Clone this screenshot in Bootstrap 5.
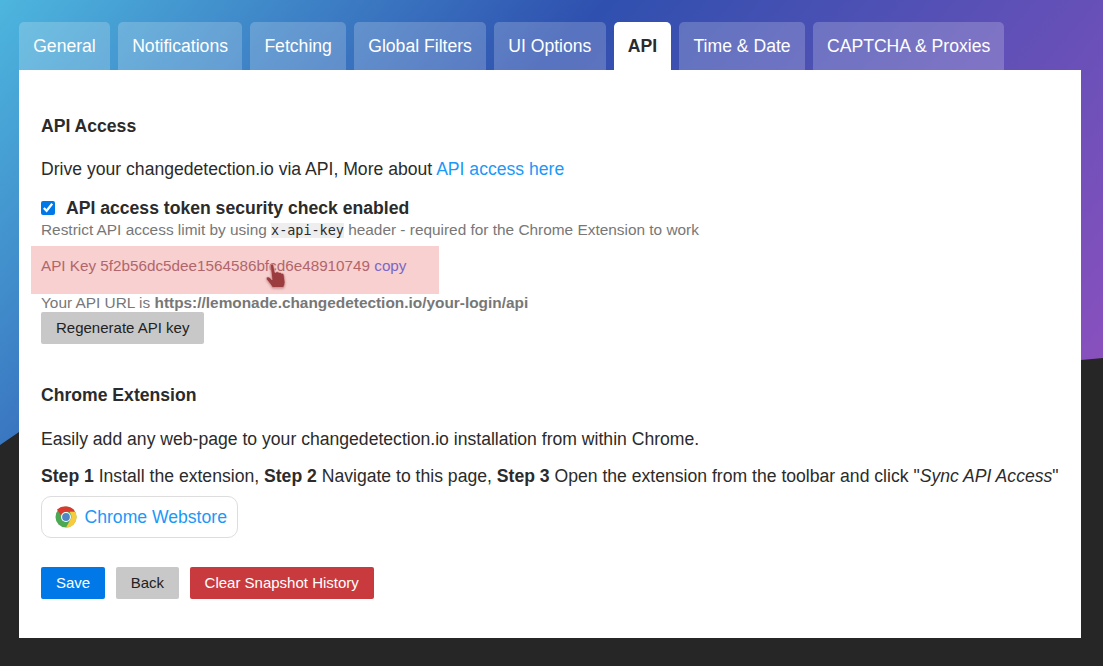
<!DOCTYPE html>
<html lang="en">
<head>
<meta charset="utf-8">
<title>Settings - API</title>
<link rel="stylesheet" href="https://cdn.jsdelivr.net/npm/bootstrap@5.3.0/dist/css/bootstrap.min.css">
<style>
html,body{height:100%}
body{font-family:"Liberation Sans",Arial,sans-serif;background:#262626;color:#2b2b2b;font-size:17.6px;line-height:1.5;position:relative;overflow:hidden;min-height:666px}
.bg-sweep{position:absolute;left:0;top:0;width:1103px;height:445px;background:linear-gradient(130deg,#4db6de,#2f50af 41%,#9150bf 100%);clip-path:polygon(0 0,1103px 0,1103px 358px,1081px 360px,19px 432px,0 445px)}
.page-wrap{position:relative;padding:22px 22px 0 19px}
.tabbar{display:flex;gap:8px;list-style:none;margin:0;padding:0;height:48px}
.tabbar a{display:block;height:48px;padding:0 14.2px;line-height:48px;font-size:17.6px;color:#fff;background:rgba(255,255,255,.2);border-radius:5px 5px 0 0;text-decoration:none}
.tabbar a.on{background:#fff;color:#2b2b2b;font-weight:700}
.sheet{background:#fff;height:568px;padding:0 22px}
.head-a{font-size:17.6px;font-weight:700;line-height:26px;margin:0;padding-top:43px}
.lede{margin:0;padding-top:17px;line-height:26px}
.lede-easy{padding-top:18px}
.lede-steps{padding-top:11px}
.lede a,.store a{color:#1b98f8;text-decoration:none}
.check-row{display:flex;align-items:center;gap:11px;padding-top:13px;height:39px;font-weight:700;line-height:26px}
.check-row input{width:14px;height:14px;margin:0;accent-color:#0078e7}
.hint{font-size:15.4px;color:#777;line-height:20px;margin:-1px 0 0}
.hint code{font-family:"DejaVu Sans Mono",monospace;font-size:13.45px;color:#2b2b2b;background:#eee;padding:0}
.keybox{position:relative;margin:5px 0 0 -10px;width:408px;height:48px;background:#f8d0d0;padding-left:10px;line-height:39px;font-size:15.25px;color:#b0666b}
.keybox a{color:#7a67c9;text-decoration:none}
.pointer{position:absolute;left:233px;top:17px;width:24px;height:28px;filter:drop-shadow(0 1px 1px rgba(120,40,40,.35))}
.url-line{font-size:15.4px;color:#777;line-height:18px;margin:0}
.pbtn{display:inline-block;font-size:15px;line-height:18px;padding:7px 15px;border-radius:2px;border:0;text-decoration:none;white-space:nowrap}
.grey-btn{background:#c8c8c8;color:#222}
.blue-btn{background:#0078e7;color:#fff}
.red-btn{background:#c93a3e;color:#fff}
.back-btn{padding-left:14.5px;padding-right:14.5px}
.regen{display:block;width:163px;height:32px;margin-top:0}
.head-b{font-size:17.6px;font-weight:700;line-height:26px;margin:0;padding-top:38px}
.store{display:inline-flex;align-items:center;gap:7.500px;height:42px;padding:0 10px 0 13px;border:1px solid #ddd;border-radius:10px;margin-top:7px}
.actions{display:flex;gap:11px;margin-top:29px}
.actions .pbtn{height:32px}
</style>
</head>
<body>
<div class="bg-sweep"></div>
<div class="page-wrap">
<ul class="tabbar">
<li><a href="#">General</a></li>
<li><a href="#">Notifications</a></li>
<li><a href="#">Fetching</a></li>
<li><a href="#">Global Filters</a></li>
<li><a href="#">UI Options</a></li>
<li><a href="#" class="on">API</a></li>
<li><a href="#">Time &amp; Date</a></li>
<li><a href="#">CAPTCHA &amp; Proxies</a></li>
</ul>
<div class="sheet">
<h4 class="head-a">API Access</h4>
<p class="lede">Drive your changedetection.io via API, More about <a href="#">API access here</a></p>
<label class="check-row"><input type="checkbox" checked>API access token security check enabled</label>
<p class="hint">Restrict API access limit by using <code>x-api-key</code> header - required for the Chrome Extension to work</p>
<div class="keybox">API Key 5f2b56dc5dee1564586bfcd6e48910749 <a href="#">copy</a>
<svg class="pointer" viewBox="0 0 24 28" aria-hidden="true"><path d="M7 1.500c1-.8 2.300-.3 2.600 1l1.400 7 1.500-.6c1-.3 2 0 2.500.7 1-.4 2 0 2.500.8 1.200-.3 2.200.4 2.500 1.600l.9 6c.3 2.300-.3 4.500-1.500 6.500H8.500c-1.500-2.500-3.500-5-5.500-7.500-.8-1-.7-2.200 0-2.800.9-.6 2-.3 3 .6l2 2L6.500 3.500c-.1-.8 0-1.500.5-2z" fill="#9b3c3f" stroke="#e7b5b5" stroke-width=".6"/></svg></div>
<p class="url-line">Your API URL is <strong>https://lemonade.changedetection.io/your-login/api</strong></p>
<a href="#" class="pbtn grey-btn regen">Regenerate API key</a>
<h4 class="head-b">Chrome Extension</h4>
<p class="lede lede-easy">Easily add any web-page to your changedetection.io installation from within Chrome.</p>
<p class="lede lede-steps"><strong>Step 1</strong> Install the extension, <strong>Step 2</strong> Navigate to this page, <strong>Step 3</strong> Open the extension from the toolbar and click "<em>Sync API Access</em>"</p>
<div class="store"><svg width="22" height="22" viewBox="0 0 22 22" aria-hidden="true"><circle cx="11" cy="11" r="10.500" fill="#4ca853"/><path d="M11 .5a10.500 10.500 0 0 1 9.100 5.250H11A5.250 5.250 0 0 0 6 9.300L2 3.800A10.500 10.500 0 0 1 11 .5z" fill="#d9392f"/><path d="M20.100 5.750A10.500 10.500 0 0 1 11 21.500l4.500-7.900A5.250 5.250 0 0 0 15.600 8L14.800 5.750z" fill="#f7cb3d"/><circle cx="11" cy="11" r="5" fill="#fff"/><circle cx="11" cy="11" r="3.900" fill="#4f86c6"/></svg><a href="#">Chrome Webstore</a></div>
<div class="actions">
<a href="#" class="pbtn blue-btn">Save</a>
<a href="#" class="pbtn grey-btn back-btn">Back</a>
<a href="#" class="pbtn red-btn">Clear Snapshot History</a>
</div>
</div>
</div>
<script src="https://cdn.jsdelivr.net/npm/bootstrap@5.3.0/dist/js/bootstrap.bundle.min.js"></script>
</body>
</html>
